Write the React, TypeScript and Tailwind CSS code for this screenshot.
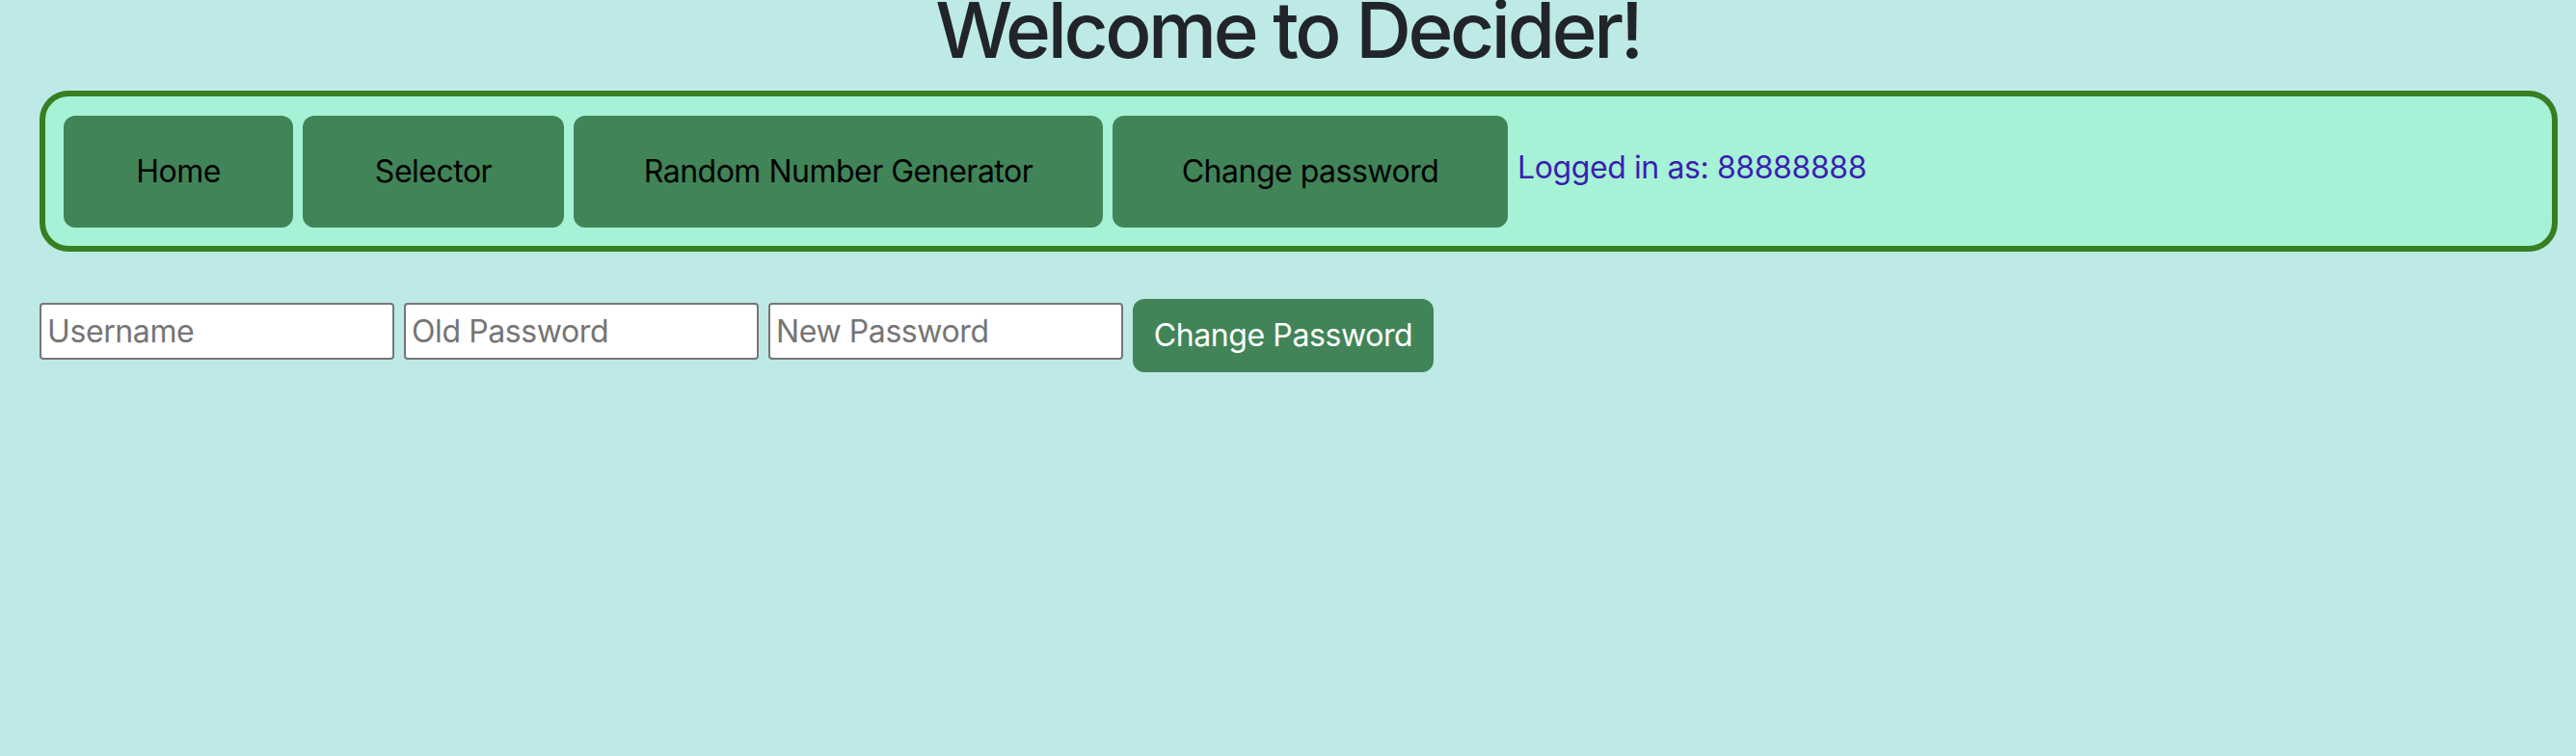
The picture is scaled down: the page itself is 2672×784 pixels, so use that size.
export default function App() {
  const navItems = [
    { label: "Home", w: "w-[238px]" },
    { label: "Selector", w: "w-[271px]" },
    { label: "Random Number Generator", w: "w-[549px]" },
    { label: "Change password", w: "w-[410px]" },
  ];

  return (
    <div className="min-h-screen w-full bg-[#bdeae6] font-['Inter',sans-serif]">
      <h1 className="text-center text-[80px] font-medium leading-[62px] tracking-[-3.4px] text-[#212529]">
        Welcome to Decider!
      </h1>

      {/* nav bar */}
      <div className="ml-[41px] mr-[19px] mt-[32px] flex h-[167px] items-center gap-[10px] rounded-[30px] border-[6px] border-[#387e22] bg-[#a6f2d6] pl-[19px]">
        {navItems.map((item) => (
          <button
            key={item.label}
            className={`${item.w} flex h-[116px] items-center justify-center rounded-[12px] bg-[#418458] text-[32px] tracking-[-0.5px] text-black`}
          >
            {item.label}
          </button>
        ))}
        <span className="mb-[8px] text-[32px] tracking-[-0.4px] text-[#3a1fb0]">
          Logged in as: 88888888
        </span>
      </div>

      {/* change password form */}
      <div className="ml-[41px] mt-[49px] flex items-start gap-[10px]">
        <input
          className="mt-[4px] h-[59px] w-[368px] rounded-[4px] border-2 border-[#767676] bg-white px-[6px] text-[32px] tracking-[-0.4px] placeholder:text-[#757575]"
          placeholder="Username"
        />
        <input
          className="mt-[4px] h-[59px] w-[368px] rounded-[4px] border-2 border-[#767676] bg-white px-[6px] text-[32px] tracking-[-0.4px] placeholder:text-[#757575]"
          placeholder="Old Password"
          type="password"
        />
        <input
          className="mt-[4px] h-[59px] w-[368px] rounded-[4px] border-2 border-[#767676] bg-white px-[6px] text-[32px] tracking-[-0.4px] placeholder:text-[#757575]"
          placeholder="New Password"
          type="password"
        />
        <button className="h-[76px] w-[312px] rounded-[12px] bg-[#418458] text-[32px] tracking-[-0.4px] text-white">
          Change Password
        </button>
      </div>
    </div>
  );
}
